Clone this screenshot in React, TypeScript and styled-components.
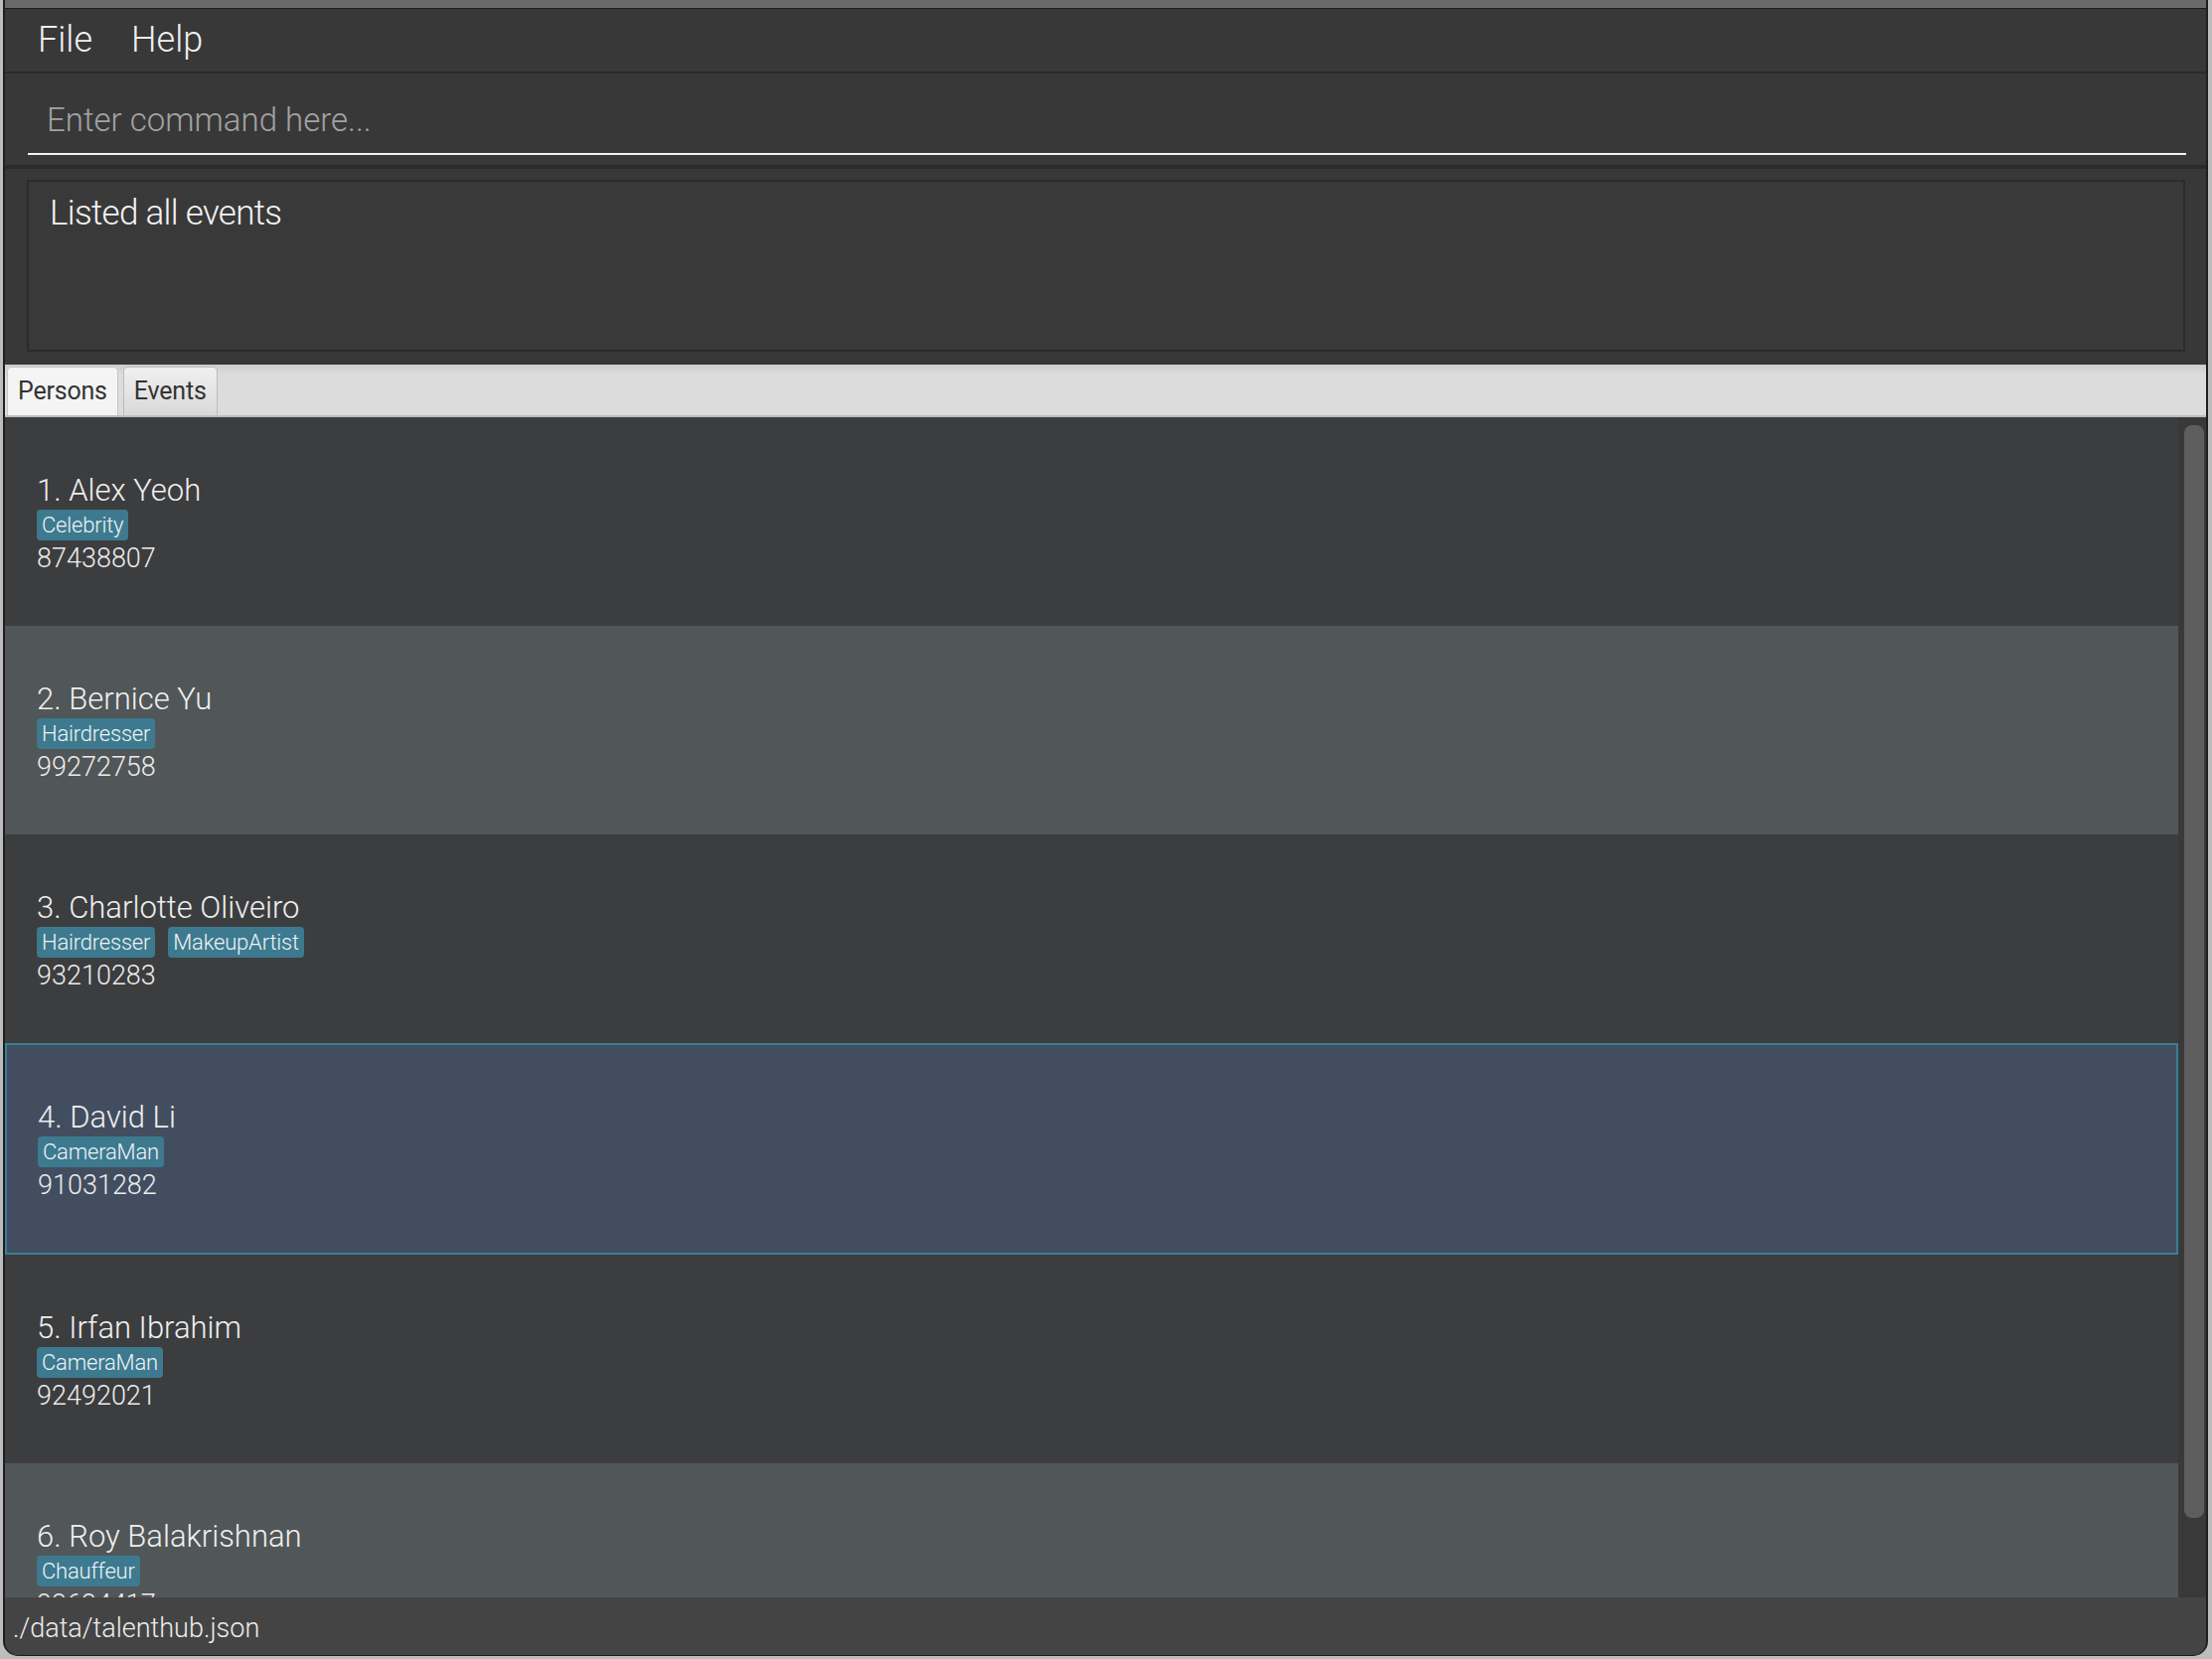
import styled, { createGlobalStyle } from 'styled-components';

type Person = {
  name: string;
  tags: string[];
  phone: string;
};

const persons: Person[] = [
  { name: 'Alex Yeoh', tags: ['Celebrity'], phone: '87438807' },
  { name: 'Bernice Yu', tags: ['Hairdresser'], phone: '99272758' },
  { name: 'Charlotte Oliveiro', tags: ['Hairdresser', 'MakeupArtist'], phone: '93210283' },
  { name: 'David Li', tags: ['CameraMan'], phone: '91031282' },
  { name: 'Irfan Ibrahim', tags: ['CameraMan'], phone: '92492021' },
  { name: 'Roy Balakrishnan', tags: ['Chauffeur'], phone: '92624417' },
];

const SELECTED = 3;

const App = () => {
  return (
    <>
      <GlobalStyle />
      <Frame>
        <Window>
          <TitleStrip />
          <MenuBar>
            <MenuItem>File</MenuItem>
            <MenuItem>Help</MenuItem>
          </MenuBar>
          <CommandArea>
            <CommandInput placeholder='Enter command here...' />
          </CommandArea>
          <ResultArea>
            <ResultBox>Listed all events</ResultBox>
          </ResultArea>
          <TabBar>
            <Tab active>Persons</Tab>
            <Tab>Events</Tab>
          </TabBar>
          <ListArea>
            <Rows>
              {persons.map((p, i) => (
                <Row key={p.name} even={i % 2 === 1} selected={i === SELECTED}>
                  <Name>
                    {i + 1}. {p.name}
                  </Name>
                  <TagRow>
                    {p.tags.map((t) => (
                      <Tag key={t}>{t}</Tag>
                    ))}
                  </TagRow>
                  <Phone>{p.phone}</Phone>
                </Row>
              ))}
            </Rows>
            <ScrollTrack>
              <ScrollThumb />
            </ScrollTrack>
          </ListArea>
          <Footer>./data/talenthub.json</Footer>
        </Window>
      </Frame>
    </>
  );
};

export default App;

const GlobalStyle = createGlobalStyle`
  html, body {
    margin: 0;
    padding: 0;
    background: #bdbdbd;
  }
  * {
    box-sizing: border-box;
  }
`;

const Frame = styled.div`
  width: 2226px;
  height: 1670px;
  padding: 0 4px 3px 3px;
  background: #bdbdbd;
  font-family: Roboto, 'Liberation Sans', sans-serif;
  font-weight: 300;
`;

const Window = styled.div`
  height: 1667px;
  display: flex;
  flex-direction: column;
  border-left: 2px solid #1f1f1f;
  border-right: 2px solid #1f1f1f;
  border-bottom: 1px solid #1f1f1f;
  border-radius: 0 0 15px 15px;
  overflow: hidden;
  background: #383838;
`;

const TitleStrip = styled.div`
  height: 9px;
  flex: none;
  background: #6a6a6a;
  border-bottom: 1px solid #1c1c1c;
`;

const MenuBar = styled.div`
  height: 65px;
  flex: none;
  display: flex;
  gap: 39px;
  padding-left: 33px;
  background: #383838;
  border-bottom: 2px solid #2b2b2b;
`;

const MenuItem = styled.span`
  font-size: 36px;
  line-height: 63px;
  color: #f0f0f0;
`;

const CommandArea = styled.div`
  height: 96px;
  flex: none;
  padding: 12px 20px 0 23px;
  background: #383838;
  border-bottom: 4px solid #2b2b2b;
`;

const CommandInput = styled.input`
  display: block;
  width: 100%;
  height: 70px;
  padding: 0 0 0 19px;
  border: none;
  border-bottom: 2px solid #f2f2f2;
  background: transparent;
  outline: none;
  font-family: Roboto, 'Liberation Sans', sans-serif;
  font-weight: 300;
  font-size: 33px;
  color: #e8e8e8;

  &::placeholder {
    color: #a3a3a3;
  }
`;

const ResultArea = styled.div`
  height: 197px;
  flex: none;
  padding: 11px 21px 13px 22px;
  background: #383838;
`;

const ResultBox = styled.div`
  height: 100%;
  padding: 11px 0 0 21px;
  border: 2px solid #2b2b2b;
  background: #393939;
  font-size: 35px;
  line-height: 42px;
  letter-spacing: -0.7px;
  color: #f4f4f4;
`;

const TabBar = styled.div`
  height: 53px;
  flex: none;
  display: flex;
  align-items: flex-end;
  gap: 5px;
  padding-left: 2px;
  background: linear-gradient(#cdcdcd 0px, #dcdcdc 10px, #dcdcdc 100%);
  border-bottom: 2px solid #bdbdbd;
`;

const Tab = styled.div<{ active?: boolean }>`
  height: 49px;
  padding: 0 10px;
  border: 1px solid ${({ active }) => (active ? '#c6c6c6' : '#bcbcbc')};
  border-bottom: none;
  border-radius: 5px 5px 0 0;
  background: ${({ active }) =>
    active ? '#f4f4f4' : 'linear-gradient(#f0f0f0, #d9d9d9)'};
  font-size: 25px;
  font-weight: 400;
  line-height: 48px;
  letter-spacing: -0.2px;
  color: #333333;
`;

const ListArea = styled.div`
  height: 1188px;
  flex: none;
  display: flex;
  background: #3c3d3f;
  overflow: hidden;
`;

const Rows = styled.div`
  flex: 1;
  display: flex;
  flex-direction: column;
  overflow: hidden;
`;

const Row = styled.div<{ even: boolean; selected: boolean }>`
  height: ${({ selected }) => (selected ? '213px' : '210px')};
  flex: none;
  display: flex;
  flex-direction: column;
  justify-content: center;
  padding: 3px 0 0 ${({ selected }) => (selected ? '31px' : '32px')};
  background: ${({ even, selected }) =>
    selected ? '#424e60' : even ? '#515658' : '#3c3d3f'};
  border: ${({ selected }) => (selected ? '2px solid #3a7e95' : 'none')};
`;

const Name = styled.div`
  font-size: 31px;
  line-height: 36px;
  color: #efefef;
`;

const TagRow = styled.div`
  display: flex;
  gap: 13px;
  margin: 1px 0 3px;
`;

const Tag = styled.span`
  height: 31px;
  padding: 0 5px;
  border-radius: 4px;
  background: #3d7a8f;
  font-size: 22px;
  letter-spacing: -0.2px;
  line-height: 31px;
  color: #eef3f5;
`;

const Phone = styled.div`
  font-size: 27px;
  line-height: 31px;
  color: #ececec;
`;

const ScrollTrack = styled.div`
  width: 28px;
  flex: none;
  padding: 8px 2px 0 6px;
  background: #393939;
`;

const ScrollThumb = styled.div`
  height: 1100px;
  border-radius: 8px;
  background: #5e5e5e;
`;

const Footer = styled.div`
  height: 58px;
  flex: none;
  display: flex;
  align-items: center;
  padding: 4px 0 0 8px;
  background: #444444;
  font-size: 27px;
  color: #ededed;
`;
